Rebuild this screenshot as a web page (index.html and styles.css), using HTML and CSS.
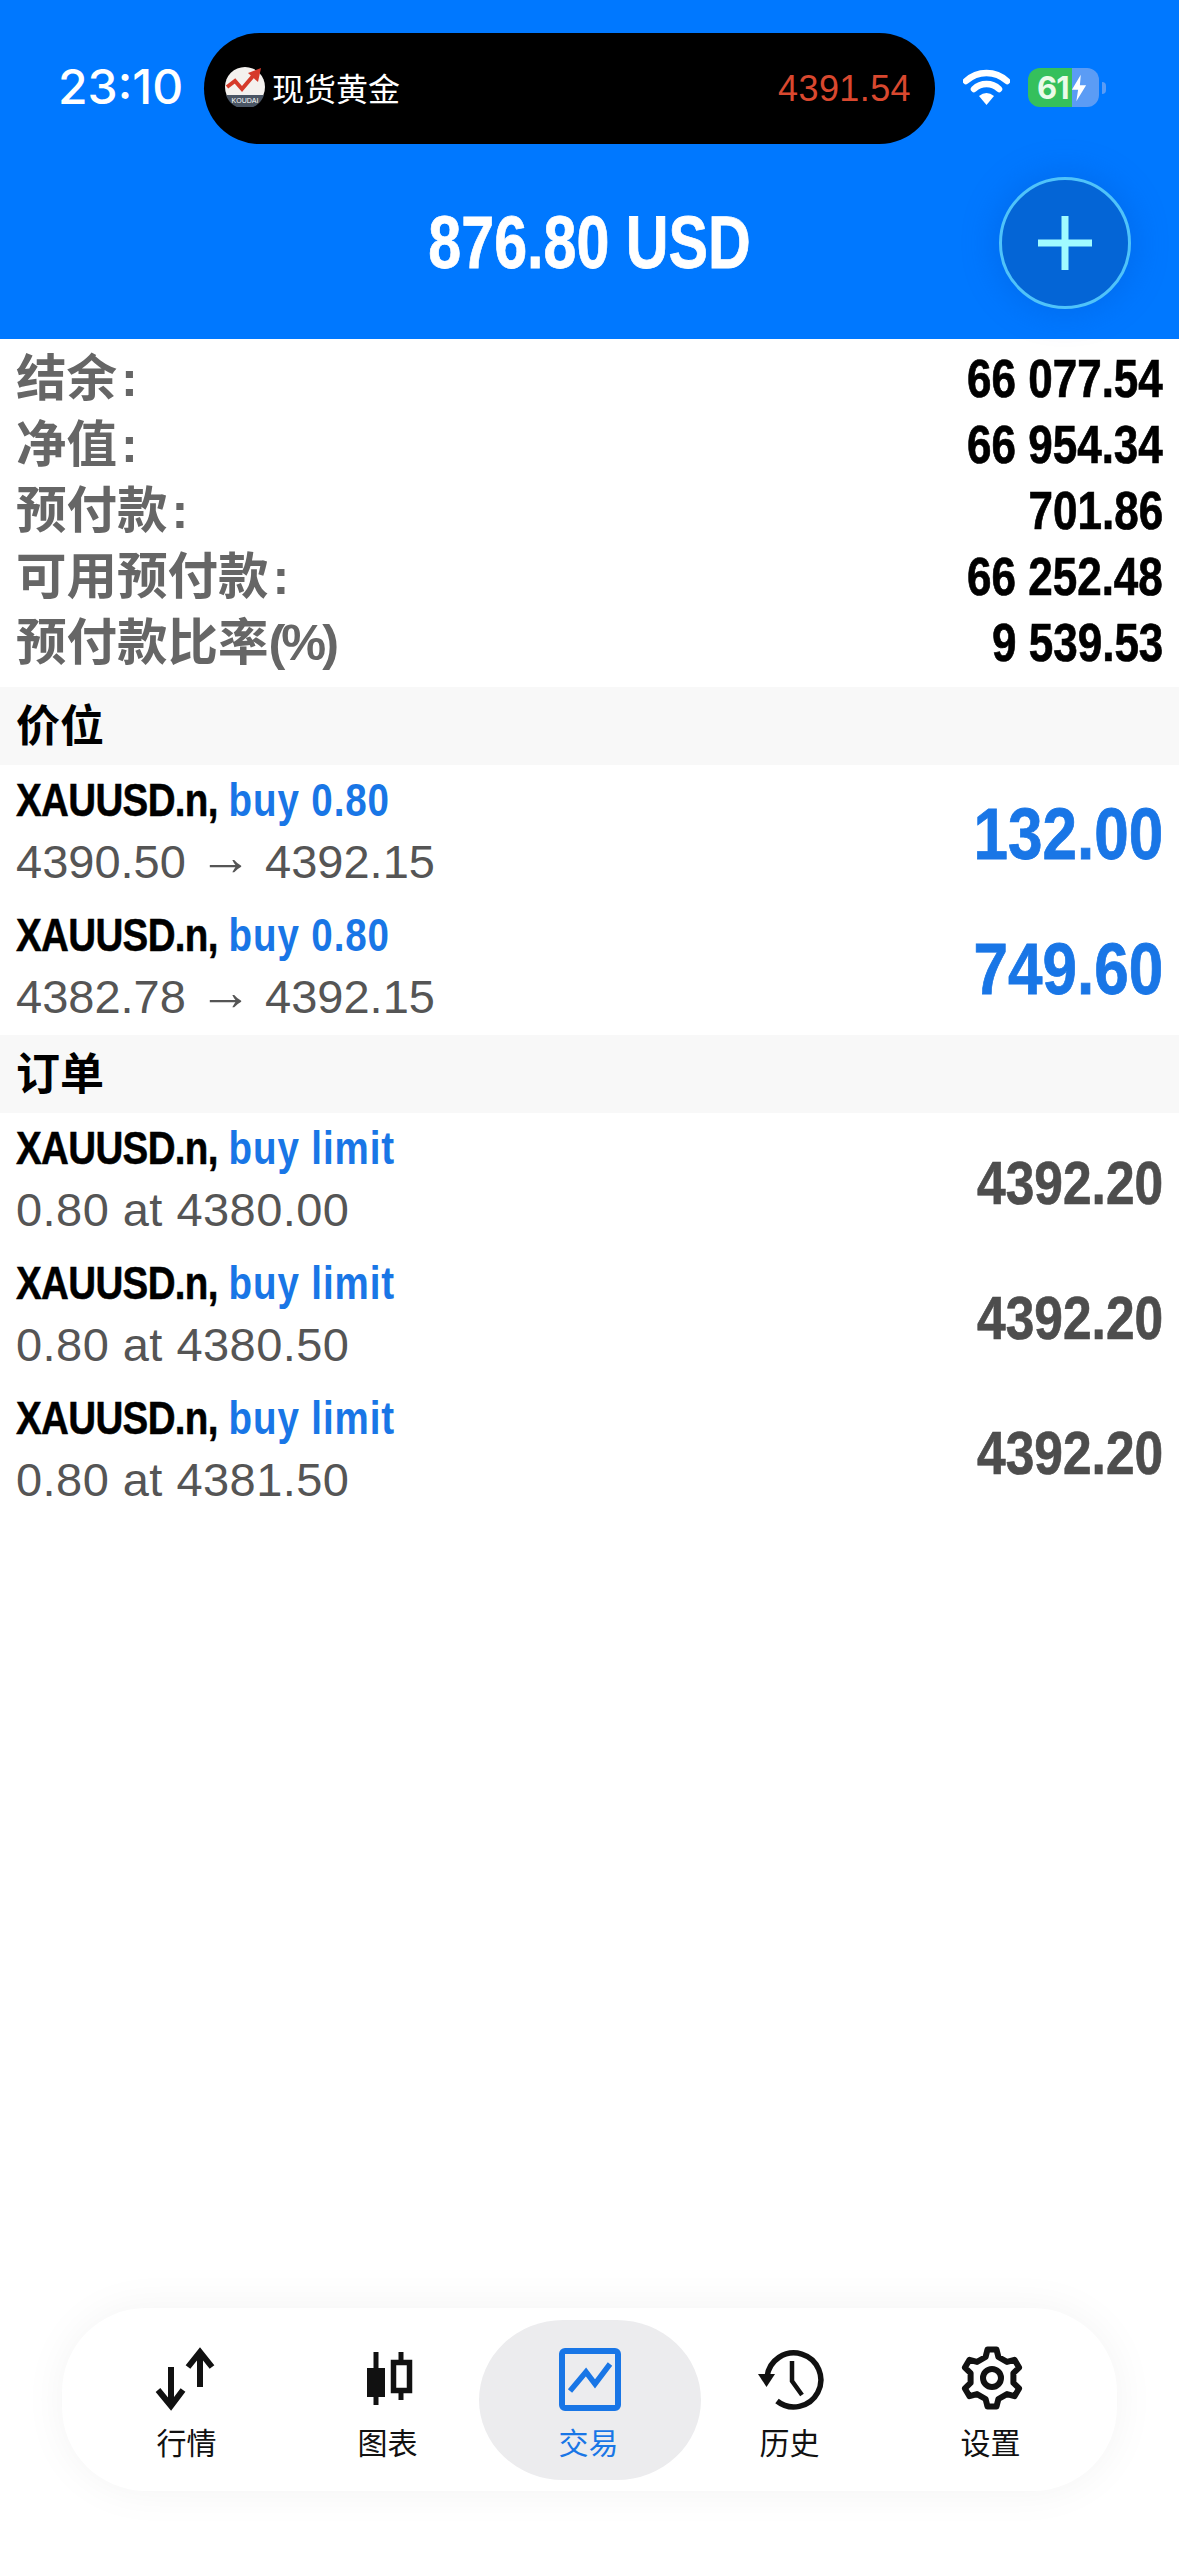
FILE: index.html
```html
<!DOCTYPE html>
<html lang="zh-CN">
<head>
<meta charset="utf-8">
<title>交易</title>
<link rel="stylesheet" href="styles.css">
</head>
<body>
<div class="app">
  <header class="header">
    <div class="status">
      <span class="time">23:10</span>
      <div class="island">
        <svg class="logo" viewBox="0 0 40 40">
          <circle cx="20" cy="20" r="20" fill="#f4f1ee"/>
          <path d="M1 28 A20 20 0 0 0 39 28 Z" fill="#4a5564"/>
          <path d="M2 20 L10 14 L17 22 L28 9" fill="none" stroke="#d63a2a" stroke-width="4"/>
          <path d="M23 6 L36 1 L33 15 Z" fill="#d63a2a"/>
          <text x="20" y="36" class="logo-text" text-anchor="middle">KOUDAI</text>
        </svg>
        <span class="island-name">现货黄金</span>
        <span class="island-price">4391.54</span>
      </div>
      <svg class="wifi" viewBox="0 0 47 36">
        <path d="M3 12 A30 30 0 0 1 44 12" fill="none" stroke="#fff" stroke-width="6.5" stroke-linecap="round"/>
        <path d="M11 20 A18 18 0 0 1 36 20" fill="none" stroke="#fff" stroke-width="6.5" stroke-linecap="round"/>
        <path d="M16 27 Q23.500 21 31 27 L23.500 36 Z" fill="#fff"/>
      </svg>
      <div class="battery">
        <div class="battery-body">
          <span class="battery-num">61</span>
          <svg class="bolt" viewBox="0 0 18 30"><path d="M11 0 L1 17 H8 L6 30 L17 12 H10 Z" fill="#fff"/></svg>
        </div>
        <span class="battery-nub"></span>
      </div>
    </div>
    <div class="title-row">
      <h1 class="title"><span class="squeeze">876.80 USD</span></h1>
      <button class="fab" aria-label="add">
        <svg viewBox="0 0 54 54"><path d="M27 0 V54 M0 27 H54" stroke="#a0fbff" stroke-width="7"/></svg>
      </button>
    </div>
  </header>

  <main class="content">
    <section class="summary">
      <div class="sum-row"><span class="sum-label">结余<span class="colon">:</span></span><span class="sum-value">66 077.54</span></div>
      <div class="sum-row"><span class="sum-label">净值<span class="colon">:</span></span><span class="sum-value">66 954.34</span></div>
      <div class="sum-row"><span class="sum-label">预付款<span class="colon">:</span></span><span class="sum-value">701.86</span></div>
      <div class="sum-row"><span class="sum-label">可用预付款<span class="colon">:</span></span><span class="sum-value">66 252.48</span></div>
      <div class="sum-row"><span class="sum-label">预付款比率<span class="percent">(%)</span></span><span class="sum-value">9 539.53</span></div>
    </section>

    <h2 class="section-head">价位</h2>
    <div class="trade">
      <div class="trade-info">
        <div class="trade-name"><span class="squeeze-left"><b class="sym">XAUUSD.n,</b> <b class="blue">buy 0.80</b></span></div>
        <div class="trade-detail">4390.50 <span class="arrow">→</span> 4392.15</div>
      </div>
      <div class="profit">132.00</div>
    </div>
    <div class="trade">
      <div class="trade-info">
        <div class="trade-name"><span class="squeeze-left"><b class="sym">XAUUSD.n,</b> <b class="blue">buy 0.80</b></span></div>
        <div class="trade-detail">4382.78 <span class="arrow">→</span> 4392.15</div>
      </div>
      <div class="profit">749.60</div>
    </div>

    <h2 class="section-head">订单</h2>
    <div class="trade">
      <div class="trade-info">
        <div class="trade-name"><span class="squeeze-left"><b class="sym">XAUUSD.n,</b> <b class="blue">buy limit</b></span></div>
        <div class="trade-detail order-detail">0.80 at 4380.00</div>
      </div>
      <div class="order-price">4392.20</div>
    </div>
    <div class="trade">
      <div class="trade-info">
        <div class="trade-name"><span class="squeeze-left"><b class="sym">XAUUSD.n,</b> <b class="blue">buy limit</b></span></div>
        <div class="trade-detail order-detail">0.80 at 4380.50</div>
      </div>
      <div class="order-price">4392.20</div>
    </div>
    <div class="trade">
      <div class="trade-info">
        <div class="trade-name"><span class="squeeze-left"><b class="sym">XAUUSD.n,</b> <b class="blue">buy limit</b></span></div>
        <div class="trade-detail order-detail">0.80 at 4381.50</div>
      </div>
      <div class="order-price">4392.20</div>
    </div>
  </main>

  <nav class="nav">
    <div class="nav-item">
      <svg class="nav-icon" viewBox="0 0 70 70" fill="none" stroke="#111" stroke-width="6">
        <path d="M47 44 V10"/><path d="M35 24 L47 9 L59 24"/>
        <path d="M18 24 V62"/><path d="M5 47 L18 63 L30 47"/>
      </svg>
      <span class="nav-label">行情</span>
    </div>
    <div class="nav-item">
      <svg class="nav-icon" viewBox="0 0 70 70" fill="none" stroke="#111" stroke-width="5">
        <path d="M22 9 V62"/><rect x="13" y="25" width="18" height="29" fill="#111" stroke="none"/>
        <path d="M47 9 V57"/><rect x="39.500" y="19.500" width="16" height="28" fill="#fff" stroke-width="5.500"/>
      </svg>
      <span class="nav-label">图表</span>
    </div>
    <div class="nav-item nav-item-active">
      <svg class="nav-icon" viewBox="0 0 70 70" fill="none" stroke="#1976e6">
        <rect x="7" y="8" width="56" height="57" rx="3" stroke-width="6"/>
        <path d="M15 48 L31 29 L40 41 L55 21" stroke-width="5.500"/>
      </svg>
      <span class="nav-label">交易</span>
    </div>
    <div class="nav-item">
      <svg class="nav-icon" viewBox="0 0 70 70" fill="none" stroke="#111" stroke-width="5.500">
        <path d="M11 34 A27 27 0 1 1 21 58"/>
        <path d="M2 31 H19 L10.500 44 Z" fill="#111" stroke="none"/>
        <path d="M36 18 V38 L46 52" stroke-width="4.500"/>
      </svg>
      <span class="nav-label">历史</span>
    </div>
    <div class="nav-item">
      <svg class="nav-icon" viewBox="0 0 70 70" fill="none" stroke="#111" stroke-width="6" stroke-linejoin="round">
        <path d="M28.600 14 L30.500 6.400 H39.500 L41.400 14 L50 18.900 L57.500 16.800 L62.100 24.600 L56.400 30.100 V39.900 L62.100 45.400 L57.500 53.200 L50 51.100 L41.400 56 L39.500 63.600 H30.500 L28.600 56 L20 51.100 L12.500 53.200 L7.900 45.400 L13.600 39.900 V30.100 L7.900 24.600 L12.500 16.800 L20 18.900 Z"/>
        <circle cx="35" cy="35" r="9"/>
      </svg>
      <span class="nav-label">设置</span>
    </div>
  </nav>
</div>
</body>
</html>
```

FILE: styles.css
```css
* { box-sizing: border-box; }
html, body { margin: 0; padding: 0; background: #fff; }
body { font-family: "Liberation Sans", "Noto Sans CJK SC", sans-serif; }
.app { width: 1179px; height: 2556px; display: flex; flex-direction: column; overflow: hidden; }

.header { background: #0078ff; height: 339px; padding-top: 33px; flex: none; }
.status { display: flex; align-items: flex-start; height: 111px; }
.time { width: 204px; padding-left: 58px; line-height: 108px; font-family: Inter, sans-serif; font-size: 48px; font-weight: 500; color: #fff; }
.island { width: 731px; height: 111px; background: #000; border-radius: 56px; display: flex; align-items: center; padding: 0 24px 0 21px; }
.logo { width: 40px; height: 40px; flex: none; margin-bottom: 3px; }
.logo-text { font-size: 7px; fill: #fff; font-family: "Liberation Sans", sans-serif; }
.island-name { margin: 0 0 3px 7px; font-size: 32px; color: #fff; font-family: "Noto Sans CJK SC", sans-serif; }
.island-price { margin-left: auto; font-size: 36px; color: #d9482f; letter-spacing: .4px; }
.wifi { width: 47px; height: 36px; margin: 36px 0 0 28px; }
.battery { display: flex; align-items: center; margin: 35px 0 0 18px; }
.battery-body { width: 71px; height: 39px; border-radius: 12px; background: linear-gradient(90deg, #35c05c 0 62%, #5b9cf5 62% 100%); display: flex; align-items: center; padding-left: 9px; gap: 2px; }
.battery-num { font-family: Inter, sans-serif; font-size: 31px; font-weight: 700; color: #eafbe9; letter-spacing: -1px; line-height: 39px; }
.bolt { width: 16px; height: 28px; }
.battery-nub { width: 4px; height: 12px; margin-left: 3px; background: #5b9cf5; border-radius: 0 4px 4px 0; }

.title-row { position: relative; height: 162px; display: flex; align-items: center; justify-content: center; padding-top: 36px; }
.title { margin: 0; font-size: 74px; font-weight: 700; color: #fff; line-height: 80px; -webkit-text-stroke: .8px #fff; }
.squeeze { display: inline-block; transform: scaleX(.8); }
.fab { position: absolute; left: 999px; top: 33px; width: 132px; height: 132px; border-radius: 50%; background: #0465d6; border: 3px solid #4fc3fa; box-shadow: 0 0 30px 6px rgba(0, 90, 210, .35); display: flex; align-items: center; justify-content: center; padding: 0; }
.fab svg { width: 54px; height: 54px; }

.content { flex: 1; }
.summary { padding: 7px 16px 11px; }
.sum-row { display: flex; justify-content: space-between; align-items: center; height: 66px; }
.sum-label { font-size: 50.5px; font-weight: 700; color: #666; line-height: 66px; }
.colon { margin-left: 4px; }
.percent { letter-spacing: -4px; }
.sum-value { font-size: 53px; font-weight: 700; color: #000; line-height: 66px; transform: scaleX(.83); transform-origin: right center; -webkit-text-stroke: .7px #000; }

.section-head { margin: 0; height: 78px; background: #f8f8f8; padding: 1px 0 0 16px; font-size: 44px; font-weight: 700; color: #000; line-height: 78px; }

.trade { height: 135px; display: flex; align-items: center; justify-content: space-between; padding: 0 16px; }
.trade-info { padding-bottom: 3px; }
.trade-name { line-height: 62px; height: 62px; font-size: 47px; white-space: nowrap; }
.squeeze-left { display: inline-block; transform: scaleX(.82); transform-origin: left center; }
.sym { color: #000; letter-spacing: -.8px; -webkit-text-stroke: .5px #000; }
.blue { color: #1976e6; letter-spacing: 1.1px; }
.trade-detail { font-size: 47px; line-height: 62px; color: #555; white-space: nowrap; }
.order-detail { letter-spacing: .45px; }
.arrow { font-size: 53px; line-height: 40px; vertical-align: 3px; }
.profit { padding-top: 2px; font-size: 73px; font-weight: 700; color: #1976e6; transform: scaleX(.85); transform-origin: right center; -webkit-text-stroke: .8px #1976e6; }
.order-price { padding-top: 3px; font-size: 62px; font-weight: 700; color: #4d4d4d; transform: scaleX(.83); transform-origin: right center; -webkit-text-stroke: .7px #4d4d4d; }

.nav { flex: none; width: 1055px; height: 183px; margin: 0 0 65px 62px; padding: 0 25px; background: #fff; border-radius: 84px; box-shadow: 0 0 44px rgba(0, 0, 0, .05); display: flex; }
.nav-item { position: relative; width: 201px; display: flex; flex-direction: column; align-items: center; padding-top: 35px; }
.nav-item-active::before { content: ""; position: absolute; left: -10px; right: -11px; top: 12px; bottom: 11px; background: #ececee; border-radius: 38% / 50%; }
.nav-icon { position: relative; width: 70px; height: 70px; }
.nav-label { position: relative; margin-top: 8px; left: -1px; font-size: 30px; line-height: 40px; color: #111; font-family: "Noto Sans CJK SC", sans-serif; }
.nav-item-active .nav-label { color: #1976e6; }
```
